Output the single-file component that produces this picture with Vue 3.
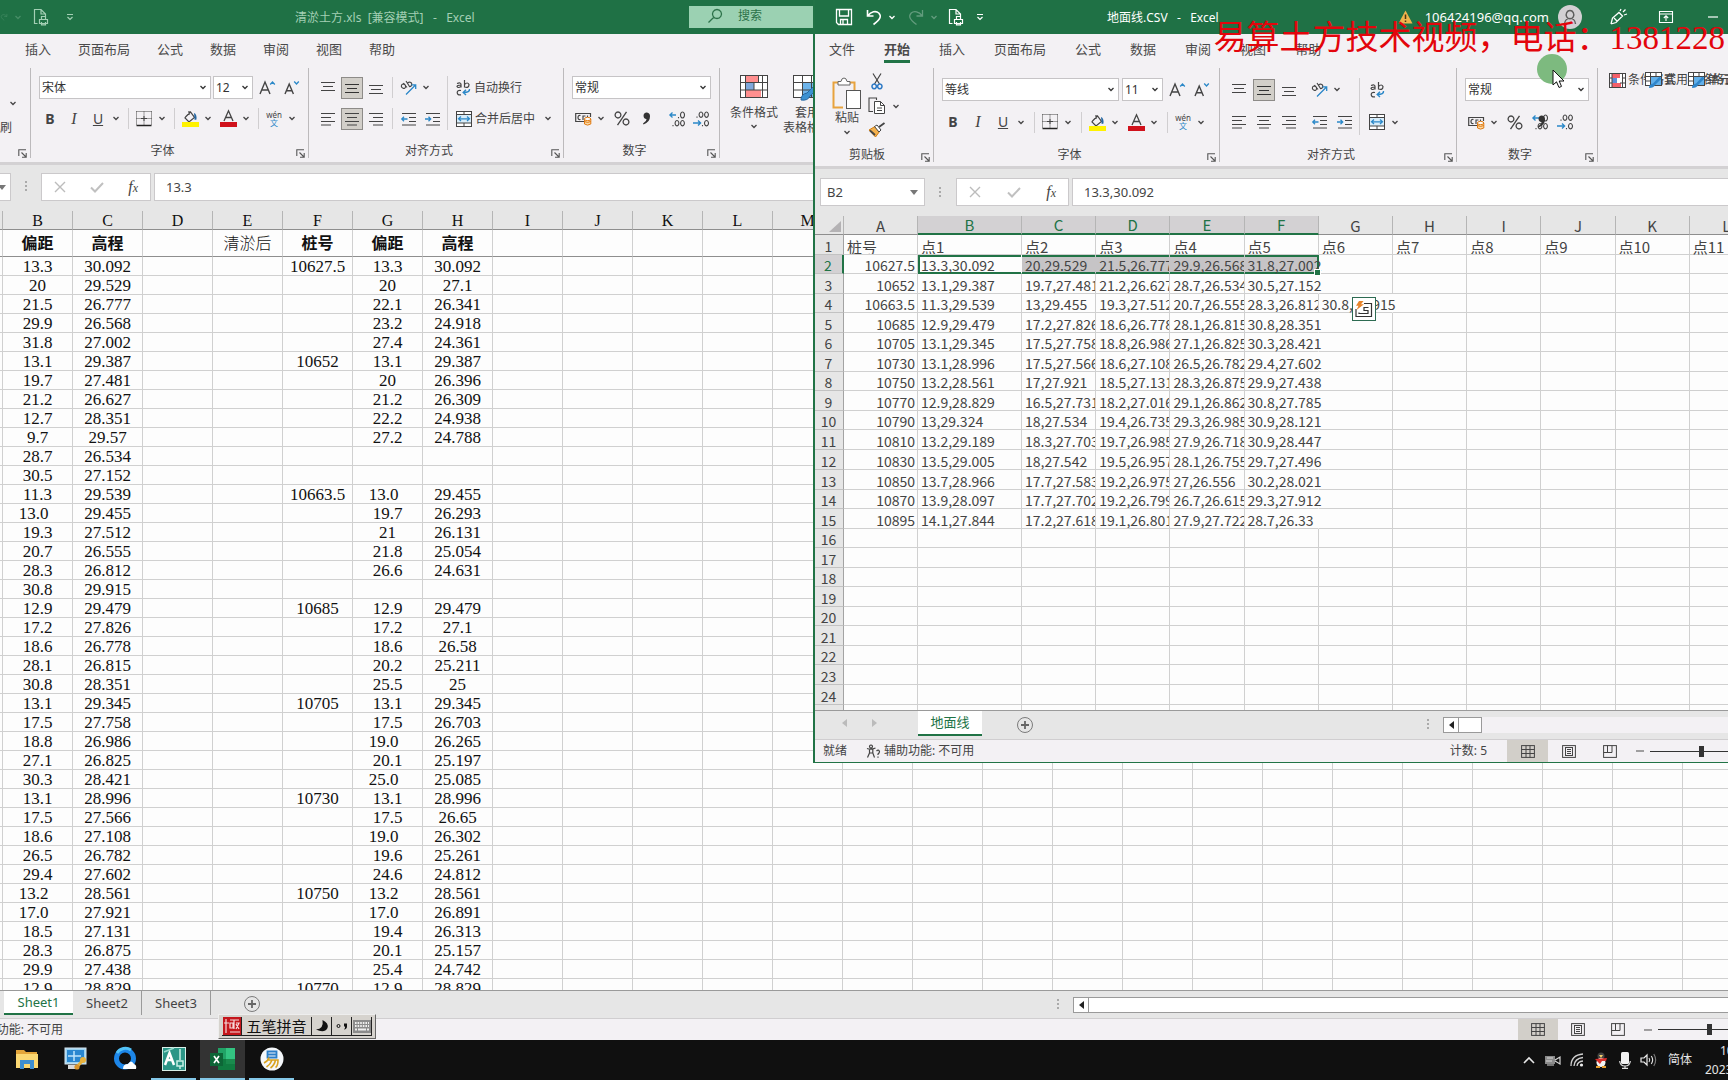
<script setup>
import { h } from 'vue'

const K = '#444'
const st = (d, c = K, w = 1, extra = '') => `<path d="${d}" fill="none" stroke="${c}" stroke-width="${w}" ${extra}/>`
const rc = (x, y, w, hh, fill, stroke = 'none') => `<rect x="${x}" y="${y}" width="${w}" height="${hh}" fill="${fill}" stroke="${stroke}"/>`

const icons = {
  chev: [8, 5, st('M1.5 1 L4 3.5 L6.5 1', 'currentColor', 1.3)],
  chevBar: [8, 8, st('M1 1.5 H7 M1.5 4 L4 6.5 L6.5 4', 'currentColor', 1.2)],
  printDoc: [16, 18, st('M4.5 15.5 H1.5 V1.5 H8 L12.5 6 V8 M8 1.5 V6 H12.5', 'currentColor', 1.2) + st('M6.5 11.5 H14.5 V15.5 H6.5 Z M8.5 11 V8.5 H12.5 V11 M8.5 14 V16.8 H12.5 V14', 'currentColor', 1.2)],
  save: [18, 18, st('M1.5 1.5 H16.5 V16.5 H3.5 L1.5 14.5 Z M4.5 2 V8 H13.5 V2 M5.5 16 V11.5 H12.5 V16 M8 12 V16', 'currentColor', 1.3)],
  undo: [18, 18, st('M2.5 2 V8 H8.5 M3 7.5 C6 3.5 11 2.5 13.8 5 C17 8.5 15 11.5 8.5 16.5', 'currentColor', 1.6)],
  redo: [18, 18, st('M15.5 2 V8 H9.5 M15 7.5 C12 3.5 7 2.5 4.2 5 C1 8.5 3 11.5 9.5 16.5', 'currentColor', 1.3)],
  lens: [16, 16, st('M10 1.5 a4.5 4.5 0 1 1 -.01 0 M6.8 9.2 L1.5 14.5', 'currentColor', 1.3)],
  warn: [15, 14, '<path d="M7.5 .5 L14.5 13.5 H.5 Z" fill="#f0b44c"/>' + st('M7.5 4.5 V9 M7.5 10.5 V12', '#4a3510', 1.5)],
  person: [24, 24, '<circle cx="12" cy="12" r="12" fill="#d2d0d3"/>' + st('M12 5.5 a3.8 4.2 0 1 1 -.01 0 M6.5 19 C7 11.5 17 11.5 17.5 19', '#5d5d5d', 1.4)],
  pen: [20, 18, st('M2 16 L3.5 10 L10 4.5 L13.5 8 L7 14.5 L2 16 M8 13 L5 10 M11 3 L12 1 M14 4 L16.5 1.5 M15 7 L18 6', 'currentColor', 1.3)],
  display: [14, 12, st('M.5 .5 H13.5 V11.5 H.5 Z M.5 3 H13.5 M7 10 V5 M4.8 7 L7 4.8 L9.2 7', 'currentColor', 1.1)],
  minus: [10, 2, st('M0 1 H10', 'currentColor', 1.2)],
  launch: [10, 9, st('M.8 7 V.8 H8 M3.5 3.5 L8 8 M8.2 4 V8.2 H4', '#555', 1.1)],
  bigA: [16, 16, st('M1 14 L6 2 L11 14 M2.7 10 H9.3', K, 1.4) + st('M11.2 4.5 L13.5 2 L15.8 4.5', '#2b88c8', 1.3)],
  smallA: [16, 16, st('M1 14 L5.2 4 L9.4 14 M2.5 10.8 H8', K, 1.4) + st('M10.2 1.5 L12.5 4 L14.8 1.5', '#2b88c8', 1.3)],
  borders: [16, 16, st('M.5 .5 H15.5 M.5 .5 V14 M15.5 .5 V14 M8 .5 V14 M.5 7.5 H15.5', K, 1, 'stroke-dasharray="1 1"') + st('M5 7.5 H11 M8 5 V10') + st('M.5 14.5 H15.5', '#222', 1.5)],
  fill: [17, 17, st('M4 6.5 L8.5 2 L12.5 7.5 L7 12 L3 8 Z M7 1 V5', K, 1.2) + '<path d="M12 3 Q15 4 14.5 9.5 L12.7 10 Z" fill="#2668a3"/>' + rc(0, 12, 17, 5, '#fff200')],
  fontA: [17, 17, st('M4 11 L8.5 .8 L13 11 M5.6 7.5 H11.4', K, 1.3) + rc(0, 12, 17, 5, '#d0111b')],
  alignTop: [14, 14, st('M0 1.5 H14 M2 5.5 H12 M0 9.5 H14')],
  alignMid: [14, 14, st('M0 3.5 H14 M2 7.5 H12 M0 11.5 H14', '#333')],
  alignBot: [14, 14, st('M0 4.5 H14 M2 8.5 H12 M0 12.5 H14')],
  left: [14, 14, st('M0 1.5 H14 M0 5.5 H10 M0 9.5 H14 M0 13 H10')],
  center: [14, 14, st('M0 1.5 H14 M2 5.5 H12 M0 9.5 H14 M2 13 H12')],
  right: [14, 14, st('M0 1.5 H14 M4 5.5 H14 M0 9.5 H14 M4 13 H14')],
  rotate: [17, 16, st('M1.5 5.5 a2.2 1.8 40 1 0 4 1.5 a2.2 1.8 40 1 0 -4 -1.5 M3.5 3 L7 7.5 M6 1 L9.5 6.5 M7.5 3.5 a2.2 2.2 0 1 1 1.5 3', K, 1.1) + st('M6 14.5 L15.5 5 M11.5 4.8 H15.7 V9', '#2b88c8', 1.3)],
  wrap: [15, 16, st('M1 3.5 Q5 2 5 4.5 V7.5 M5 5 Q1 5 1 6.5 Q2 8.5 5 6.5 M8.5 0 V7.5 M8.5 4.5 Q11.5 1.5 13 4.5 Q13 8.5 8.5 7 M5 10.5 Q1.2 9.8 1.2 12.8 Q1.5 15.5 5 14.8', K, 1.2) + st('M13.5 9 Q14 12.5 7.5 12.5 M10 9.8 L7.2 12.5 L10 15', '#2b88c8', 1.4)],
  outdent: [15, 14, st('M1 1.5 H15 M8 5.5 H15 M8 9.5 H15 M1 13 H15') + st('M1 7 H6.5 M3 4.8 L.8 7 L3 9.2', '#2b88c8', 1.3)],
  indent: [15, 14, st('M1 1.5 H15 M8 5.5 H15 M8 9.5 H15 M1 13 H15') + st('M0 7 H5.5 M3.5 4.8 L5.7 7 L3.5 9.2', '#2b88c8', 1.3)],
  merge: [16, 16, rc(.5, .5, 15, 15, '#fff', K) + rc(1, 4, 14, 8, '#d8edfa') + st('M.5 3.5 H15.5 M.5 12 H15.5 M8 .5 V3.5 M8 12 V15.5') + st('M2.5 7.8 H13.5 M5 5.5 L2.5 7.8 L5 10 M11 5.5 L13.5 7.8 L11 10', '#2b88c8', 1.2)],
  money: [17, 15, st('M9 10.5 H.7 V2.5 H15.5 V6 M5.5 4.5 Q3 4 3 6.5 Q3 9 5.5 8.5 M8 9 V5 H10.5 M12.5 4.5 V6', K, 1.2) + '<path d="M9.5 8 V13 Q12.5 15.2 15.8 13 V8 Z" fill="#fbd9a5" stroke="#e07b13"/><ellipse cx="12.6" cy="8" rx="3.2" ry="1.6" fill="#fff" stroke="#e07b13"/>' + st('M9.5 10.5 Q12.5 12.4 15.8 10.5', '#e07b13')],
  percent: [16, 15, st('M4 1 a2.9 3 0 1 1 -.01 0 M12 8 a2.9 3 0 1 1 -.01 0 M12.5 .8 L3.5 14.2', K, 1.3)],
  comma: [9, 13, '<path d="M4.2 .5 A3.6 3.6 0 0 1 8 4.5 Q8 10 1.5 12.5 L1 11.5 Q4.5 9.5 4.6 7.2 A3.4 3.4 0 0 1 4.2 .5 Z" fill="#333"/>'],
  moreDec: [17, 16, st('M13.5 1 a2 3 0 1 1 -.01 0 M8 9.5 a1.9 2.7 0 1 1 -.01 0 M13.5 9.5 a1.9 2.7 0 1 1 -.01 0 M9.5 6 V7.2 M4 14 V15.2', K, 1.1) + st('M.8 4 H7 M3.5 1.5 L.9 4 L3.5 6.5', '#2b88c8', 1.3)],
  lessDec: [17, 16, st('M8 1 a1.9 2.7 0 1 1 -.01 0 M13.5 1 a1.9 2.7 0 1 1 -.01 0 M13.5 9.5 a2 2.7 0 1 1 -.01 0 M4 5.5 V6.7 M9.5 14 V15.2', K, 1.1) + st('M0 12 H7.5 M5 9.5 L7.6 12 L5 14.5', '#2b88c8', 1.3)],
  cond: [28, 23, rc(.5, .5, 27, 22, '#fff', K) + rc(6, 1, 12, 7, '#ff8f8f') + rc(6, 8, 8, 7, '#7fa8dc') + rc(6, 15, 15, 7, '#ff8f8f') + st('M.5 7.5 H27.5 M.5 15 H27.5 M5.5 .5 V22.5 M22.5 .5 V22.5 M18.5 .5 V7.5 M14 7.5 V15')],
  condSmall: [17, 15, rc(.5, .5, 16, 14, '#fff', K) + rc(3, 1, 8, 4, '#f4606a') + rc(3, 5, 5, 5, '#5c8fd6') + rc(3, 10, 9, 4, '#f4606a') + st('M3 .5 V14.5 M13.5 .5 V14.5 M.5 5 H3 M.5 10 H3 M13 5 H16.5 M11 10 H16.5')],
  tableSmall: [17, 16, rc(.5, .5, 16, 13, '#fff', K) + rc(5, 4, 11, 9, '#62b0ea') + st('M.5 4.5 H16.5 M.5 9 H5 M5.5 .5 V13.5 M11 .5 V5') + '<path d="M4 16 Q4 12 8 11.5 L14.5 4.5 L16.5 6.5 L10 13 Q9 16 4 16 Z" fill="#2f86cb"/>'],
  tableFmt: [28, 26, rc(.5, .5, 27, 22, '#fff', K) + rc(9, 8, 18, 14, '#6db4ea') + st('M.5 7.5 H27.5 M.5 15 H27.5 M9.5 .5 V22.5 M18.5 .5 V22.5') + '<path d="M8 25 Q8 19 14 18 L24 8 L27 11 L17 21 Q15 26 8 25 Z" fill="#3b91d1" stroke="#2668a3"/>'],
  paste: [30, 34, st('M11 30.5 H1.5 V5.5 H8 M16 5.5 H22.5 V13', '#e8a33d', 2) + '<path d="M6 8 V4.5 H9 Q9.5 1 12 1 Q14.5 1 15 4.5 H18 V8 Z" fill="#fff" stroke="#666"/>' + rc(14.5, 13.5, 14, 18, '#fff', '#555')],
  scissors: [12, 17, st('M2 .5 L8.5 11 M10 .5 L3.5 11', K, 1.2) + st('M3.2 11 a2.2 2.4 0 1 1 -.01 0 M8.8 11 a2.2 2.4 0 1 1 -.01 0', '#2b78c4', 1.5)],
  copy: [18, 18, st('M5 14.5 H1 V1 H8.5 V3', K, 1.1) + '<path d="M6.5 4.5 H12.5 L16.5 8.5 V16.5 H6.5 Z" fill="#fff" stroke="#444"/>' + st('M12.5 4.5 V8.5 H16.5 M9 11 H14 M9 13.5 H14')],
  brush: [18, 16, '<path d="M1 8 L7 4.5 L11.5 9.5 L7.5 15 Z" fill="#f3b04d" stroke="#d07c10"/>' + '<path d="M6.5 4.5 L9 3 L13 8 L11 10 Z" fill="#fff" stroke="#444"/>' + st('M11 5 L16.5 1 M2 8.5 L7 13', '#444', 1.8)],
  cross: [12, 12, st('M1 1 L11 11 M11 1 L1 11', '#bcbcbc', 1.4)],
  tick: [14, 11, st('M1 5.5 L5 9.5 L13 1', '#c0c0c0', 2)],
  tri: [8, 5, '<path d="M0 0 H8 L4 5 Z" fill="#777"/>'],
  corner: [12, 11, '<path d="M12 0 V11 H0 Z" fill="#b4b2b4"/>'],
  plus: [18, 18, '<circle cx="9" cy="9" r="7.5" fill="none" stroke="#7b7b7b"/>' + st('M9 5 V13 M5 9 H13', '#666', 1.8)],
  normal: [14, 13, rc(.6, .6, 12.8, 11.8, 'none', K) + st('M5 .5 V12.5 M9 .5 V12.5 M.5 4.5 H13.5 M.5 8.5 H13.5')],
  page: [14, 13, rc(.6, .6, 12.8, 11.8, 'none', K) + rc(3.5, 2.5, 7, 8, 'none', K) + st('M5 4.5 H9 M5 6.5 H9 M5 8.5 H9')],
  breaks: [14, 13, rc(.6, .6, 12.8, 11.8, 'none', K) + st('M4.5 .5 V8 M.5 7.5 H9 V.5')],
  access: [15, 15, st('M5 1 a1.5 1.5 0 1 1 -.01 0 M1 4.5 Q5 6 9.5 4 M3.5 5.5 L3.5 9 L1.5 13.5 M6.8 5.5 V9 L8.5 13.5 M3.5 9 H6.8 M10.5 7 Q12.5 5 13.5 7.5 Q13.5 9 12 10 V11 M12 12.5 V13.8', '#444', 1.2)],
  arrowL: [5, 8, '<path d="M5 0 V8 L0 4 Z" fill="currentColor"/>'],
  arrowR: [5, 8, '<path d="M0 0 V8 L5 4 Z" fill="currentColor"/>'],
  quick: [18, 18, st('M1 9 V16.5 H16.5 V3.5 H9 M4 12.5 V13.5 H13 V10.5 H9 V7.5 H13.5', '#333', 1.2) + '<path d="M4 1 H8.5 L6 4.2 H9 L1.5 10 L3.5 5.8 H1 Z" fill="#e8842a"/>'],
  pointer: [13, 20, '<path d="M1 1 V16 L4.5 12.8 L7 18.5 L9.5 17.4 L7.2 12 H12 Z" fill="#fff" stroke="#111"/>'],
  folder: [22, 20, '<path d="M0 1 H8 L10 3 H21 V18 H0 Z" fill="#e3a53a"/><path d="M0 5 H22 V19 H0 Z" fill="#fbd873"/><path d="M4 11 H18 V20 H14 V15 H8 V20 H4 Z" fill="#3d8ed0"/>'],
  monitor: [24, 24, rc(1, 1, 21, 16, '#9cd3f2', '#d8e6ef') + rc(3, 3, 17, 12, '#2a87d0') + st('M4 9 H17 M10 4 V14', '#bfe4fa', 1.5) + rc(4, 18, 10, 4, '#d8d8d8') + st('M12 21 L19 13', '#e8b13c', 3) + '<circle cx="19" cy="13" r="3" fill="#e8b13c"/><circle cx="13" cy="20" r="2.6" fill="#d9942a"/>'],
  browser: [24, 24, '<circle cx="12" cy="11.5" r="8.5" fill="none" stroke="#1d86e8" stroke-width="5"/><path d="M4 6 A10 10 0 0 1 18 3" fill="none" stroke="#53c3f7" stroke-width="3"/><path d="M10 22 Q10 17 15 17 Q18 12 21 17 Q24 18 23 22 Z" fill="#fff"/>'],
  cad: [24, 24, rc(.5, .5, 23, 23, '#2b9687', '#d9efe9') + st('M3 18 L7.5 6 L12 18 M5 13 H10', '#fff', 2.5) + st('M18 2 V13 M15 14 H21 V19 H15 Z M18 19 V22', '#c8efe5', 1.5) + st('M2 5 L12 1', '#9adccf', 1.5)],
  excel: [25, 22, rc(8, 0, 17, 22, '#21a366') + rc(16, 0, 9, 11, '#33c481') + rc(8, 11, 17, 11, '#107c41') + rc(16, 11, 9, 5, '#1a8a4d') + rc(0, 5, 13, 13, '#0d6637') + st('M4 8 L9 15 M9 8 L4 15', '#fff', 1.7)],
  yi: [24, 24, '<circle cx="12" cy="12" r="11.5" fill="#f4f7fa"/>' + st('M7.5 4.5 H16.5 V10.5 H7.5 Z M7.5 7.5 H16.5', '#2c7fc9', 1.8) + st('M9 10.5 Q8 14 4 16 M7.5 13 H18 Q18 19 15.5 20.5 M12 13 Q10.5 17.5 6.5 20 M15.5 13 Q14.5 18 10.5 21', '#d9a31f', 1.6)],
  up: [12, 8, st('M1 7 L6 2 L11 7', '#e8e8e8', 1.6)],
  camera: [17, 11, rc(1, 1, 10, 8, '#8a8a8a') + st('M3 3 H9 M2 6 H8 M11 5 L16 2 V9 L11 6 M3 10 H10', '#d5d5d5', 1.2)],
  wifi: [14, 14, st('M1 13 Q1 2 13 1 M4 13 Q4.5 5.5 13 4.5 M7 13 Q7.5 8.5 13 8', '#cfcfcf', 1.3) + '<circle cx="11.5" cy="12" r="1.6" fill="#eee"/>'],
  penguin: [14, 16, '<ellipse cx="7" cy="4" rx="3.5" ry="3.5" fill="#444"/><path d="M5 3 H9 L7 6 Z" fill="#f6d36a"/><ellipse cx="7" cy="10.5" rx="4.5" ry="4.5" fill="#f4f4f4"/><path d="M1 7 L13 6 L12 9 H8 L6 12 L3 9 Z" fill="#d92f2a"/><path d="M2 14 H6 V16 H2 Z M8 14 H12 V16 H8 Z" fill="#e8a02f"/>'],
  mic: [12, 17, '<rect x="2" y="0" width="8" height="12" rx="1.5" fill="#f2f2f2"/>' + st('M.7 9 Q1 14 6 14 Q11 14 11.3 9 M6 14 V16.3 M3 16.3 H9', '#e0e0e0', 1.2)],
  speaker: [17, 14, st('M1 5 H4 L7 2 V12 L4 9 H1 Z', '#eee', 1.2) + st('M9 5 Q10.5 7 9 9 M11.3 3 Q14 7 11.3 11', '#ddd', 1.2) + st('M13.8 1 Q17.5 7 13.8 13', '#777', 1.2)],
  moon: [12, 12, '<path d="M6.5 0 Q13 3 11.5 8 Q8.5 13.5 0 9.5 Q8 9 6.5 0 Z" fill="#111"/>'],
  punct: [12, 8, '<circle cx="2.5" cy="4" r="1.5" fill="none" stroke="#111"/><path d="M8 1.5 H11 V4.5 Q11 7 8 7.5 Q9.5 6 9 4.5 H8 Z" fill="#111"/>'],
  keys: [18, 13, rc(0, 0, 18, 13, '#8b8b8b') + st('M2 3 H16 M2 6 H16', '#eee', 1.8, 'stroke-dasharray="1.6 1"') + st('M2 9.5 H4 M5 9.5 H13 M14 9.5 H16', '#eee', 1.8)],
  seal: [18, 18, rc(0, 0, 18, 18, '#c4161c') + st('M3 2 V16 M1 6 H6 M7 3 H16 M11 3 V12 M7 6 H10 V11 H7 Z M13 6 H16 L13 12 M13 7 L16 12 M7 15 H17', '#f6dcdc', 1.2)]
}

const Icon = (props) => {
  const [w, ht, body] = icons[props.name]
  return h('svg', { width: props.w || w, height: props.ht || ht, viewBox: `0 0 ${w} ${ht}`, 'aria-hidden': 'true', innerHTML: body })
}
Icon.props = ['name', 'w', 'ht']

const backTabs = ['插入', '页面布局', '公式', '数据', '审阅', '视图', '帮助']
const frontTabs = ['文件', '开始', '插入', '页面布局', '公式', '数据', '审阅', '视图', '帮助']

const backCols = 'BCDEFGHIJKLMNOPQRSTUVWXYZ'.split('')
const backHead = ['偏距', '高程', '', '清淤后', '桩号', '偏距', '高程']
const backData = `13.3|30.092|10627.5|13.3|30.092
20|29.529||20|27.1
21.5|26.777||22.1|26.341
29.9|26.568||23.2|24.918
31.8|27.002||27.4|24.361
13.1|29.387|10652|13.1|29.387
19.7|27.481||20|26.396
21.2|26.627||21.2|26.309
12.7|28.351||22.2|24.938
9.7|29.57||27.2|24.788
28.7|26.534|||
30.5|27.152|||
11.3|29.539|10663.5|13.0 |29.455
13.0 |29.455||19.7|26.293
19.3|27.512||21|26.131
20.7|26.555||21.8|25.054
28.3|26.812||26.6|24.631
30.8|29.915|||
12.9|29.479|10685|12.9|29.479
17.2|27.826||17.2|27.1
18.6|26.778||18.6|26.58
28.1|26.815||20.2|25.211
30.8|28.351||25.5|25
13.1|29.345|10705|13.1|29.345
17.5|27.758||17.5|26.703
18.8|26.986||19.0 |26.265
27.1|26.825||20.1|25.197
30.3|28.421||25.0 |25.085
13.1|28.996|10730|13.1|28.996
17.5|27.566||17.5|26.65
18.6|27.108||19.0 |26.302
26.5|26.782||19.6|25.261
29.4|27.602||24.6|24.812
13.2 |28.561|10750|13.2 |28.561
17.0 |27.921||17.0 |26.891
18.5|27.131||19.4|26.313
28.3|26.875||20.1|25.157
29.9|27.438||25.4|24.742
12.9|28.829|10770|12.9|28.829`.split('\n').map((line) => {
  const [b, c, f, g, hh] = line.split('|')
  const row = [b, c, '', '', f, g, hh]
  return backCols.map((_, i) => row[i] || '')
})

const frontCols = 'ABCDEFGHIJKL'.split('')
const frontData = `桩号|点1|点2|点3|点4|点5|点6|点7|点8|点9|点10|点11
10627.5|13.3,30.092|20,29.529|21.5,26.777|29.9,26.568|31.8,27.002
10652|13.1,29.387|19.7,27.481|21.2,26.627|28.7,26.534|30.5,27.152
10663.5|11.3,29.539|13,29.455|19.3,27.512|20.7,26.555|28.3,26.812|30.8,29.915
10685|12.9,29.479|17.2,27.826|18.6,26.778|28.1,26.815|30.8,28.351
10705|13.1,29.345|17.5,27.758|18.8,26.986|27.1,26.825|30.3,28.421
10730|13.1,28.996|17.5,27.566|18.6,27.108|26.5,26.782|29.4,27.602
10750|13.2,28.561|17,27.921|18.5,27.131|28.3,26.875|29.9,27.438
10770|12.9,28.829|16.5,27.731|18.2,27.016|29.1,26.862|30.8,27.785
10790|13,29.324|18,27.534|19.4,26.735|29.3,26.985|30.9,28.121
10810|13.2,29.189|18.3,27.703|19.7,26.985|27.9,26.718|30.9,28.447
10830|13.5,29.005|18,27.542|19.5,26.957|28.1,26.755|29.7,27.496
10850|13.7,28.966|17.7,27.583|19.2,26.975|27,26.556|30.2,28.021
10870|13.9,28.097|17.7,27.702|19.2,26.799|26.7,26.615|29.3,27.912
10895|14.1,27.844|17.2,27.618|19.1,26.801|27.9,27.722|28.7,26.33`.split('\n').map((l) => l.split('|'))
const frontRows = Array.from({ length: 25 }, (_, r) => frontCols.map((_, c) => (frontData[r] || [])[c] || ''))

const frontCellClass = (r, c) => ({
  num: c === 0 && r > 0,
  title: r === 0,
  sel: r === 1 && c > 0 && c < 6,
  shade: r === 1 && c > 1 && c < 6,
  first: r === 1 && c === 1,
  last: r === 1 && c === 5,
  spill: !!frontRows[r][c] && !frontRows[r][c + 1]
})

const taskApps = [
  { icon: 'folder', label: '文件资源管理器' },
  { icon: 'monitor', label: '系统工具' },
  { icon: 'browser', label: '浏览器' },
  { icon: 'cad', label: 'CAD', open: true },
  { icon: 'excel', label: 'Excel', active: true },
  { icon: 'yi', label: '易算土方', open: true }
]
const trayIcons = ['up', 'camera', 'wifi', 'penguin', 'mic', 'speaker']
</script>

<template>
  <div class="screen">
    <main class="desktop">
      <section class="window back">
        <header class="titlebar">
          <div class="qat">
            <Icon name="redo" class="dim" /><Icon name="chev" class="dim" />
            <button aria-label="打印预览"><Icon name="printDoc" /></button>
            <button aria-label="自定义快速访问工具栏"><Icon name="chevBar" /></button>
          </div>
          <h1 class="doc">清淤土方.xls&nbsp; [兼容模式]&nbsp;&nbsp; -&nbsp;&nbsp; Excel</h1>
          <button class="search"><Icon name="lens" />搜索</button>
        </header>
        <nav class="tabs"><button v-for="t in backTabs" :key="t">{{ t }}</button></nav>
        <div class="ribbon">
          <div class="group clip">
            <div class="tools"><Icon name="chev" /><span>刷</span></div>
            <footer><Icon name="launch" class="launch" /></footer>
          </div>
          <div class="group font">
            <div class="tools">
              <div class="row">
                <div class="combo wide"><select aria-label="字体"><option>宋体</option></select><Icon name="chev" /></div>
                <div class="combo size"><select aria-label="字号"><option>12</option></select><Icon name="chev" /></div>
                <button class="grow" aria-label="增大字号"><Icon name="bigA" /></button>
                <button class="grow" aria-label="减小字号"><Icon name="smallA" /></button>
              </div>
              <div class="row second">
                <button class="ib"><b>B</b></button><button class="ib gap"><i>I</i></button><button class="ib gap"><u>U</u></button><button class="dd" aria-label="下划线样式"><Icon name="chev" /></button>
                <span class="sep"></span>
                <button class="ib" aria-label="边框"><Icon name="borders" /></button><button class="dd" aria-label="边框选项"><Icon name="chev" /></button>
                <span class="sep"></span>
                <button class="ib" aria-label="填充颜色"><Icon name="fill" /></button><button class="dd" aria-label="填充选项"><Icon name="chev" /></button>
                <button class="ib gap" aria-label="字体颜色"><Icon name="fontA" /></button><button class="dd" aria-label="颜色选项"><Icon name="chev" /></button>
                <span class="sep"></span>
                <button class="ib wen"><span>wén</span><span class="zi">文</span></button><button class="dd" aria-label="拼音选项"><Icon name="chev" /></button>
              </div>
            </div>
            <footer>字体<Icon name="launch" class="launch" /></footer>
          </div>
          <div class="group align">
            <div class="tools split">
              <div>
                <div class="row">
                  <button class="ib" aria-label="顶端对齐"><Icon name="alignTop" /></button><button class="ib on gap" aria-label="垂直居中"><Icon name="alignMid" /></button><button class="ib gap" aria-label="底端对齐"><Icon name="alignBot" /></button>
                  <span class="sep"></span>
                  <button class="ib" aria-label="方向"><Icon name="rotate" /></button><button class="dd" aria-label="方向选项"><Icon name="chev" /></button>
                </div>
                <div class="row second">
                  <button class="ib" aria-label="左对齐"><Icon name="left" /></button><button class="ib on gap" aria-label="居中"><Icon name="center" /></button><button class="ib gap" aria-label="右对齐"><Icon name="right" /></button>
                  <span class="sep"></span>
                  <button class="ib" aria-label="减少缩进量"><Icon name="outdent" /></button><button class="ib gap" aria-label="增加缩进量"><Icon name="indent" /></button>
                </div>
              </div>
              <div class="wrapcol">
                <div class="row"><button class="tb"><Icon name="wrap" />自动换行</button></div>
                <div class="row second"><button class="tb"><Icon name="merge" />合并后居中</button><button class="dd far" aria-label="合并选项"><Icon name="chev" /></button></div>
              </div>
            </div>
            <footer>对齐方式<Icon name="launch" class="launch" /></footer>
          </div>
          <div class="group number">
            <div class="tools">
              <div class="row"><div class="combo full"><select aria-label="数字格式"><option>常规</option></select><Icon name="chev" /></div></div>
              <div class="row second">
                <button class="ib" aria-label="会计数字格式"><Icon name="money" /></button><button class="dd" aria-label="会计选项"><Icon name="chev" /></button>
                <button class="ib pc" aria-label="百分比"><Icon name="percent" /></button>
                <button class="ib gap" aria-label="千位分隔"><Icon name="comma" /></button>
                <span class="sep"></span>
                <button class="ib" aria-label="增加小数位数"><Icon name="moreDec" /></button><button class="ib gap" aria-label="减少小数位数"><Icon name="lessDec" /></button>
              </div>
            </div>
            <footer>数字<Icon name="launch" class="launch" /></footer>
          </div>
          <div class="group styles">
            <button class="big"><Icon name="cond" /><span>条件格式</span><Icon name="chev" /></button>
            <button class="big"><Icon name="tableFmt" ht="26" /><span>套用</span><span>表格格式</span></button>
          </div>
        </div>
        <div class="formula">
          <div class="namebox"><input aria-label="名称框" value="" /><Icon name="tri" /></div>
          <span class="dots"></span>
          <div class="fx"><Icon name="cross" /><Icon name="tick" /><em>f<small>x</small></em></div>
          <input class="entry" aria-label="编辑栏" value="13.3" />
        </div>
        <div class="sheet">
          <table>
            <colgroup><col class="edge" /><col v-for="c in backCols" :key="c" class="unit" /></colgroup>
            <thead><tr><th></th><th v-for="c in backCols" :key="c">{{ c }}</th></tr></thead>
            <tbody>
              <tr class="head"><td></td><td v-for="(c, i) in backCols" :key="c" :class="{ light: i === 3 }">{{ backHead[i] }}</td></tr>
              <tr v-for="(row, r) in backData" :key="r"><td></td><td v-for="(v, i) in row" :key="i" :class="{ spaced: v.endsWith(' ') }">{{ v.trim() }}</td></tr>
            </tbody>
          </table>
        </div>
        <div class="sheetbar">
          <button class="stab active">Sheet1</button><button class="stab">Sheet2</button><button class="stab">Sheet3</button>
          <button class="add" aria-label="新工作表"><Icon name="plus" /></button>
          <span class="space"></span><span class="dots"></span>
          <div class="hscroll"><button aria-label="向左滚动"><Icon name="arrowL" /></button></div>
        </div>
        <div class="status">
          <span class="tail">辅助功能: 不可用</span><span class="space"></span>
          <button class="view on" aria-label="普通"><Icon name="normal" /></button><button class="view" aria-label="页面布局"><Icon name="page" /></button><button class="view" aria-label="分页预览"><Icon name="breaks" /></button>
          <button class="less" aria-label="缩小"><Icon name="minus" w="8" /></button>
          <div class="zoom"><input type="range" aria-label="显示比例" value="50" /></div>
        </div>
      </section>

      <section class="window front">
        <header class="titlebar">
          <div class="qat">
            <button aria-label="保存"><Icon name="save" /></button>
            <button aria-label="撤消"><Icon name="undo" /></button><Icon name="chev" />
            <Icon name="redo" class="dim again" /><Icon name="chev" class="dim" />
            <button class="print" aria-label="打印预览"><Icon name="printDoc" /></button>
            <button aria-label="自定义快速访问工具栏"><Icon name="chevBar" /></button>
          </div>
          <h1 class="doc">地面线.CSV&nbsp;&nbsp; -&nbsp;&nbsp; Excel</h1>
          <div class="account">
            <Icon name="warn" /><span class="mail">106424196@qq.com</span><Icon name="person" />
            <button class="pen" aria-label="墨迹"><Icon name="pen" /></button>
            <button class="disp" aria-label="功能区显示选项"><Icon name="display" /></button>
            <button class="min" aria-label="最小化"><Icon name="minus" /></button>
          </div>
        </header>
        <nav class="tabs"><button v-for="t in frontTabs" :key="t" :class="{ current: t === '开始' }">{{ t }}</button></nav>
        <div class="ribbon">
          <div class="group clip">
            <div class="tools">
              <button class="paste"><Icon name="paste" /><span>粘贴</span><Icon name="chev" /></button>
              <div class="stack">
                <button aria-label="剪切"><Icon name="scissors" /></button>
                <button aria-label="复制"><Icon name="copy" /><Icon name="chev" /></button>
                <button aria-label="格式刷"><Icon name="brush" /></button>
              </div>
            </div>
            <footer>剪贴板<Icon name="launch" class="launch" /></footer>
          </div>
          <div class="group font">
            <div class="tools">
              <div class="row">
                <div class="combo wide"><select aria-label="字体"><option>等线</option></select><Icon name="chev" /></div>
                <div class="combo size"><select aria-label="字号"><option>11</option></select><Icon name="chev" /></div>
                <button class="grow" aria-label="增大字号"><Icon name="bigA" /></button>
                <button class="grow" aria-label="减小字号"><Icon name="smallA" /></button>
              </div>
              <div class="row second">
                <button class="ib"><b>B</b></button><button class="ib gap"><i>I</i></button><button class="ib gap"><u>U</u></button><button class="dd" aria-label="下划线样式"><Icon name="chev" /></button>
                <span class="sep"></span>
                <button class="ib" aria-label="边框"><Icon name="borders" /></button><button class="dd" aria-label="边框选项"><Icon name="chev" /></button>
                <span class="sep"></span>
                <button class="ib" aria-label="填充颜色"><Icon name="fill" /></button><button class="dd" aria-label="填充选项"><Icon name="chev" /></button>
                <button class="ib gap" aria-label="字体颜色"><Icon name="fontA" /></button><button class="dd" aria-label="颜色选项"><Icon name="chev" /></button>
                <span class="sep"></span>
                <button class="ib wen"><span>wén</span><span class="zi">文</span></button><button class="dd" aria-label="拼音选项"><Icon name="chev" /></button>
              </div>
            </div>
            <footer>字体<Icon name="launch" class="launch" /></footer>
          </div>
          <div class="group align">
            <div class="tools split">
              <div>
                <div class="row">
                  <button class="ib" aria-label="顶端对齐"><Icon name="alignTop" /></button><button class="ib on gap" aria-label="垂直居中"><Icon name="alignMid" /></button><button class="ib gap" aria-label="底端对齐"><Icon name="alignBot" /></button>
                  <button class="ib apart" aria-label="方向"><Icon name="rotate" /></button><button class="dd" aria-label="方向选项"><Icon name="chev" /></button>
                </div>
                <div class="row second">
                  <button class="ib" aria-label="左对齐"><Icon name="left" /></button><button class="ib gap" aria-label="居中"><Icon name="center" /></button><button class="ib gap" aria-label="右对齐"><Icon name="right" /></button>
                  <button class="ib apart" aria-label="减少缩进量"><Icon name="outdent" /></button><button class="ib gap" aria-label="增加缩进量"><Icon name="indent" /></button>
                </div>
              </div>
              <div class="wrapcol">
                <div class="row"><button class="ib" aria-label="自动换行"><Icon name="wrap" /></button></div>
                <div class="row second"><button class="ib" aria-label="合并后居中"><Icon name="merge" /></button><button class="dd" aria-label="合并选项"><Icon name="chev" /></button></div>
              </div>
            </div>
            <footer>对齐方式<Icon name="launch" class="launch" /></footer>
          </div>
          <div class="group number">
            <div class="tools">
              <div class="row"><div class="combo full"><select aria-label="数字格式"><option>常规</option></select><Icon name="chev" /></div></div>
              <div class="row second">
                <button class="ib" aria-label="会计数字格式"><Icon name="money" /></button><button class="dd" aria-label="会计选项"><Icon name="chev" /></button>
                <button class="ib pc" aria-label="百分比"><Icon name="percent" /></button>
                <button class="ib gap over" aria-label="增加小数位数"><Icon name="moreDec" /><Icon name="comma" class="stacked" /></button>
                <button class="ib gap" aria-label="减少小数位数"><Icon name="lessDec" /></button>
              </div>
            </div>
            <footer>数字<Icon name="launch" class="launch" /></footer>
          </div>
          <div class="group styles">
            <button class="tight"><Icon name="condSmall" />条件格式</button>
            <button class="tight"><Icon name="tableSmall" />套用表格格式</button>
            <button class="tight"><Icon name="tableSmall" />单元格样式</button>
          </div>
        </div>
        <div class="formula">
          <div class="namebox"><input aria-label="名称框" value="B2" /><Icon name="tri" /></div>
          <span class="dots"></span>
          <div class="fx"><Icon name="cross" /><Icon name="tick" /><em>f<small>x</small></em></div>
          <input class="entry" aria-label="编辑栏" value="13.3,30.092" />
        </div>
        <div class="sheet">
          <table>
            <colgroup><col class="rownum" /><col class="ca" /><col class="cb" /><col v-for="n in 10" :key="n" /></colgroup>
            <thead><tr><th class="corner"><Icon name="corner" /></th><th v-for="(c, i) in frontCols" :key="c" :class="{ picked: i > 0 && i < 6 }">{{ c }}</th></tr></thead>
            <tbody>
              <tr v-for="(row, r) in frontRows" :key="r">
                <th :class="{ picked: r === 1 }">{{ r < 24 ? r + 1 : '' }}</th>
                <td v-for="(v, c) in row" :key="c" :class="frontCellClass(r, c)">{{ v }}<span v-if="r === 1 && c === 5" class="handle"></span><button v-if="r === 3 && c === 6" class="quick" aria-label="快速分析"><Icon name="quick" /></button></td>
              </tr>
            </tbody>
          </table>
        </div>
        <div class="sheetbar">
          <div class="arrows"><Icon name="arrowL" /><Icon name="arrowR" /></div>
          <button class="stab active">地面线</button>
          <button class="add" aria-label="新工作表"><Icon name="plus" /></button>
          <span class="space"></span><span class="dots"></span>
          <div class="hscroll"><button aria-label="向左滚动"><Icon name="arrowL" /></button><span class="thumb"></span></div>
        </div>
        <div class="status">
          <span>就绪</span><span class="acc"><Icon name="access" />辅助功能: 不可用</span><span class="space"></span>
          <span class="count">计数: 5</span>
          <button class="view on" aria-label="普通"><Icon name="normal" /></button><button class="view" aria-label="页面布局"><Icon name="page" /></button><button class="view" aria-label="分页预览"><Icon name="breaks" /></button>
          <button class="less" aria-label="缩小"><Icon name="minus" w="8" /></button>
          <div class="zoom"><input type="range" aria-label="显示比例" value="50" /></div>
        </div>
      </section>

      <div class="ime">
        <button class="sealbtn" aria-label="极点"><Icon name="seal" /></button>
        <button class="name">五笔拼音</button>
        <button aria-label="半角"><Icon name="moon" /></button>
        <button aria-label="标点"><Icon name="punct" /></button>
        <button aria-label="软键盘"><Icon name="keys" /></button>
      </div>
    </main>

    <footer class="taskbar">
      <button v-for="a in taskApps" :key="a.icon" class="app" :class="{ open: a.open, active: a.active }" :aria-label="a.label"><Icon :name="a.icon" /></button>
      <span class="space"></span>
      <div class="tray"><span v-for="t in trayIcons" :key="t"><Icon :name="t" /></span></div>
      <span class="lang">简体</span>
      <div class="clock"><span class="time">10</span><span>2023</span></div>
    </footer>

    <div class="banner">易算土方技术视频，电话：1381228</div>
    <div class="spot"><Icon name="pointer" /></div>
  </div>
</template>

<style>
body { margin: 0; overflow: hidden; }
</style>

<style scoped>
.screen, .screen * { box-sizing: border-box; }
.screen { position: relative; display: flex; flex-direction: column; height: 100vh; overflow: hidden; font: 12px/16px "Noto Sans", "Noto Sans CJK SC", sans-serif; color: #444; }
.screen svg { display: block; flex: none; overflow: visible; }
button { display: flex; align-items: center; justify-content: center; flex: none; border: 0; padding: 0; margin: 0; background: none; font: inherit; color: inherit; white-space: nowrap; }
input, select { border: 0; padding: 0; margin: 0; background: none; font: inherit; color: inherit; outline: 0; min-width: 0; }
.desktop { position: relative; display: flex; flex: 1; min-height: 0; }
.window { display: flex; flex-direction: column; background: #f3f1f4; }
.back { width: 100%; min-height: 0; overflow: hidden; }
.front { position: absolute; left: 813px; right: 0; top: 0; height: 763px; overflow: hidden; border-left: 2px solid #217346; border-bottom: 1px solid #217346; }
.space { flex: 1; }

/* title bars */
.titlebar { display: flex; align-items: center; flex: none; height: 34px; background: #1f7145; color: #fff; }
.back .titlebar { color: #a3cfb4; }
.doc { margin: 0; padding-top: 1px; font: inherit; white-space: nowrap; }
.qat { display: flex; align-items: center; flex: none; }
.dim { opacity: .3; }
.back .qat { width: 295px; gap: 19px; overflow: hidden; }
.back .qat > svg:first-child { width: 8px; }
.back .qat > svg + svg { margin-left: -13px; }
.back .qat > button { margin-left: -8px; }
.back .qat > button + button { margin-left: -2px; }
.back .doc { width: 394px; }
.search { width: 124px; height: 22px; justify-content: flex-start; gap: 15px; padding: 0 0 2px 18px; background: #9bd1b2; color: #2c7249; }
.front .titlebar { margin-left: -2px; }
.front .qat { width: 294px; padding-left: 22px; gap: 5px; }
.front .qat > button + button { margin-left: 7px; }
.front .qat > .again { margin-left: 6px; }
.front .qat > .print { margin-left: 5px; }
.account { display: flex; align-items: center; margin-left: auto; }
.mail { margin: 0 9px 0 12px; font-size: 13px; }
.pen { margin-left: 27px; }
.disp { margin-left: 30px; }
.min { margin: 0 10px 0 35px; }

/* ribbon tabs */
.tabs { display: flex; align-items: center; flex: none; height: 32px; padding-bottom: 3px; font-size: 13px; color: #4a4a4a; }
.tabs button { height: 28px; }
.back .tabs { gap: 27px; padding-left: 25px; }
.front .tabs { gap: 29px; padding-left: 14px; padding-bottom: 2px; }
.tabs .current { font-weight: 700; border-bottom: 3px solid #217346; border-top: 3px solid transparent; }

/* ribbon */
.ribbon { display: flex; flex: none; border-bottom: 3px solid #d3d1d3; overflow: hidden; }
.back .ribbon { height: 99px; --gap: 2px; --sep: 5px; }
.front .ribbon { height: 103px; --gap: 3px; --sep: 6px; }
.group { display: flex; flex-direction: column; flex: none; margin: 2px 0 4px; border-right: 1px solid #bcbabc; }
.group footer { position: relative; display: flex; justify-content: center; align-items: center; height: 14px; line-height: 14px; margin-top: auto; padding-right: 14px; }
.launch { position: absolute; right: 2px; bottom: 0; }
.tools { padding: 8px 8px 0; }
.front .tools { padding-top: 10px; }
.row { display: flex; align-items: center; height: 23px; }
.second { margin-top: 8px; }
.front .second { height: 26px; }
.combo { display: flex; align-items: center; flex: none; height: 23px; padding: 0 3px 0 2px; background: #fff; border: 1px solid #c6c4c6; color: #333; }
.combo select { flex: 1; appearance: none; height: 20px; }
.combo.wide { width: 172px; }
.front .combo.wide { width: 177px; }
.combo.size { width: 40px; margin: 0 6px 0 2px; }
.front .combo.size { width: 41px; margin-left: 3px; }
.combo.full { width: 100%; }
.grow { margin-right: 9px; }
.ib { width: 22px; height: 22px; font-size: 14px; }
.ib i { font-family: "Liberation Serif", serif; font-size: 16px; }
.ib.gap { margin-left: var(--gap); }
.ib.on { background: #d2cfc9; border: 1px solid #8d8b88; }
.dd { width: 14px; height: 22px; }
.sep { width: 1px; height: 21px; margin: 0 4px 0 var(--sep); background: #d0ced0; }
.wen { flex-direction: column; font-size: 8px; line-height: 8px; }
.zi { color: #2b88c8; }
.back .clip { width: 31px; }
.back .clip .tools { display: flex; flex-direction: column; gap: 14px; padding: 33px 0 0; overflow: hidden; }
.back .clip .tools svg { margin-left: 9px; }
.back .font { width: 278px; }
.back .align { width: 255px; }
.back .number { width: 156px; }
.front .clip { width: 119px; }
.front .font { width: 286px; }
.front .align { width: 237px; }
.front .number { width: 141px; }
.tools.split { display: flex; padding-right: 0; }
.wrapcol { margin-left: 4px; padding-left: 8px; border-left: 1px solid #d0ced0; }
.front .wrapcol { padding-left: 6px; }
.tb { gap: 3px; }
.dd.far { margin-left: 6px; }
.pc { margin-left: 3px; }
.apart { margin-left: 8px; }
.over { position: relative; }
.stacked { position: absolute; left: 8px; top: 4px; }
.group.styles { flex-direction: row; border: 0; flex: 1; min-width: 0; }
.back .styles { padding: 7px 0 0 10px; gap: 5px; }
.big { flex-direction: column; justify-content: flex-start; width: 48px; line-height: 15px; }
.big svg:first-child { margin-bottom: 7px; }
.big svg + span + svg { margin-top: 4px; }
.big svg:first-child[height="26"] { margin-bottom: 4px; }
.front .styles { padding: 4px 0 0 11px; }
.tight { width: 36px; height: 16px; justify-content: flex-start; gap: 2px; }
.tight + .tight { width: 43px; }
.front .clip .tools { display: flex; padding: 5px 0 0 17px; }
.paste { flex-direction: column; }
.paste svg:first-child { margin-bottom: -1px; }
.paste span { margin-bottom: 4px; }
.stack { display: flex; flex-direction: column; gap: 7px; margin-left: 6px; }
.stack button { justify-content: flex-start; gap: 6px; }
.stack button:first-child svg { margin-left: 3px; }

/* formula bars */
.formula { display: flex; flex: none; padding: 8px 0 10px; background: #e6e6e6; font-size: 13px; }
.front .formula { padding: 9px 0 10px 5px; }
.namebox, .fx { display: flex; align-items: center; height: 28px; background: #fff; border: 1px solid #cbc9cb; }
.namebox { width: 105px; padding: 0 6px; }
.namebox input { flex: 1; }
.back .namebox { width: 11px; padding: 0 4px 0 0; justify-content: flex-end; border-left: 0; overflow: hidden; }
.back .namebox input { display: none; }
.dots { width: 2px; height: 11px; margin: 8px 14px; background: repeating-linear-gradient(#aaa 0 2px, transparent 2px 4px); }
.front .formula .dots { margin: 9px 15px 0 14px; }
.fx { width: 110px; justify-content: space-between; padding: 0 12px; }
.front .fx { width: 113px; }
.fx em { font: italic 16px/20px "Liberation Serif", serif; }
.fx small { font-size: 12px; }
.entry { flex: 1; height: 28px; margin-left: 3px; padding-left: 11px; background: #fff; border: 1px solid #cbc9cb; border-right: 0; }

/* grids */
.sheet { flex: 1; min-height: 0; overflow: hidden; background: #fdfdfd; }
table { table-layout: fixed; border-collapse: separate; border-spacing: 0; }
th, td { padding: 0; font-weight: 400; white-space: nowrap; overflow: hidden; border-right: 1px solid #d0d0d0; border-bottom: 1px solid #d0d0d0; line-height: 17px; }
thead th { height: 19px; background: #e6e6e6; border-bottom-color: #8e8e8e; border-right-color: #b5b5b5; }
.back table { width: 1753px; font-family: "Liberation Serif", "Noto Sans CJK SC", serif; font-size: 17px; color: #111; text-align: center; }
.back th { font-size: 16px; padding-top: 1px; }
.back td { padding-top: 2px; line-height: 16px; }
.edge { width: 3px; }
.unit { width: 70px; }
.back tbody tr { height: 19px; }
.back tbody .head { height: 27px; font-size: 16px; }
.head td { font-weight: 700; border-bottom-color: #8e8e8e; }
.back .head td { line-height: 20px; }
.head .light { font-weight: 300; }
.back .spaced { padding-right: 8px; }
.front table { width: calc(100% + 36px); font-family: "Noto Sans CJK SC", sans-serif; font-size: 14px; }
.rownum { width: 29px; }
.ca { width: 74px; }
.cb { width: 104px; }
.front tbody tr { height: 20px; }
.front tbody tr:nth-child(2n) { height: 19px; }
.front tbody tr:nth-child(12n) { height: 20px; }
.front tbody th, .front td { padding-top: 3px; line-height: 15px; }
.front td { padding-left: 3px; color: #444; }
.front thead th { font-size: 15px; padding-top: 1px; }
.front tbody th { background: #e6e6e6; border-right-color: #a3a3a3; border-bottom-color: #c2c2c2; padding-right: 1px; }
.front th.picked { background: #d3d1d3; color: #217346; }
.front thead th.picked { border-bottom: 2px solid #217346; padding-top: 0; }
.front tbody th.picked { border-right: 2px solid #217346; }
.front .corner svg { margin: 2px 0 0 14px; }
.front td.num { text-align: right; padding-right: 2px; padding-left: 0; }
.front td.title { font-size: 15px; }
.front td.spill { overflow: visible; position: relative; border-right-color: transparent; }
.front td.title.spill { border-right-color: #d0d0d0; }
.front td.sel { position: relative; border-right-color: transparent; box-shadow: inset 0 2px #217346, inset 0 -1px #217346; border-bottom-color: #217346; }
.front td.shade { background: #c6c4c6; }
.front td.first { box-shadow: inset 2px 0 #217346, inset 0 2px #217346, inset 0 -1px #217346; }
.front td.last { border-right: 2px solid #217346; }
.handle { position: absolute; right: -4px; bottom: -3px; width: 7px; height: 7px; background: #217346; border: 1px solid #fff; }
.quick { position: absolute; z-index: 2; left: 33px; top: 3px; width: 24px; height: 24px; background: #fff; border: 1px solid #2d6b52; }

/* sheet tabs and status bars */
.sheetbar { display: flex; flex: none; height: 28px; background: #e6e6e6; border-top: 1px solid #9a9a9a; font-size: 13px; }
.front .sheetbar { height: 30px; border-bottom: 1px solid #d0ced0; }
.stab { height: 24px; width: 69px; padding-bottom: 1px; border-right: 1px solid #9a9a9a; }
.back .stab:first-child { margin-left: 4px; }
.stab.active { background: #fff; color: #217346; border-right: 0; border-bottom: 2px solid #217346; }
.front .stab { width: 64px; height: 25px; }
.add { margin: 4px 0 0 32px; height: 18px; }
.front .add { margin: 5px 0 0 34px; }
.arrows { display: flex; align-items: center; gap: 25px; width: 103px; padding: 0 0 4px 27px; color: #bbb; }
.hscroll { display: flex; margin-top: 6px; height: 16px; width: 655px; background: #fff; border: 1px solid #9a9a9a; border-right: 0; color: #222; }
.hscroll button { width: 15px; border-right: 1px solid #9a9a9a; }
.front .hscroll { width: 285px; background: #f3f1f4; border: 0; }
.front .hscroll button { width: 16px; background: #fff; border: 1px solid #9a9a9a; }
.thumb { width: 23px; background: #fff; border: 1px solid #9a9a9a; border-left-width: 0; }
.status { display: flex; align-items: center; flex: none; height: 22px; white-space: nowrap; }
.back .status { border-top: 1px solid #d0ced0; }
.front .status { padding-left: 8px; }
.tail { display: flex; justify-content: flex-end; width: 63px; overflow: hidden; }
.acc { display: flex; align-items: center; gap: 3px; margin-left: 19px; }
.count { margin-right: 20px; }
.view { width: 40px; height: 22px; }
.front .view { width: 41px; }
.view.on { background: #d2cfc9; }
.less { width: 20px; }
.zoom { flex: none; width: 70px; overflow: hidden; height: 16px; }
.front .zoom { width: 78px; }
.zoom input { appearance: none; display: block; width: 102px; height: 16px; background: linear-gradient(#333, #333) center / 100% 1px no-repeat; }
.zoom input::-webkit-slider-thumb { appearance: none; width: 5px; height: 11px; background: #333; }

/* input method bar */
.ime { position: absolute; left: 218px; bottom: 1px; display: flex; align-items: center; height: 25px; padding: 2px 3px; background: #d6d3ce; border: 1px solid; border-color: #eee #666 #666 #eee; }
.ime button { width: 20px; height: 19px; border-right: 1px solid #222; border-bottom: 1px solid #222; }
.ime .name { width: 70px; font-size: 15px; color: #111; }

/* taskbar */
.taskbar { display: flex; flex: none; height: 40px; padding-left: 2px; background: #101010; color: #e6e6e6; }
.app { width: 45px; margin: 0 2px; border-bottom: 2px solid transparent; }
.app.open { border-bottom-color: #84c8e8; }
.app.active { background: #333; border-bottom-color: #84c8e8; }
.tray { display: flex; align-items: center; }
.tray span { display: flex; justify-content: center; width: 24px; }
.lang { align-self: center; margin: 0 13px 0 7px; }
.clock { display: flex; flex-direction: column; justify-content: center; width: 23px; overflow: hidden; line-height: 19px; }
.time { padding-left: 15px; }

/* screen overlays */
.banner { position: absolute; right: 3px; top: 18px; font: 33px/40px "Liberation Serif", "Noto Sans CJK SC", serif; color: #e3050c; white-space: nowrap; }
.spot { position: absolute; right: 161px; top: 54px; width: 30px; height: 30px; padding: 15px 0 0 15px; border-radius: 50%; background: #7dba7f; }
</style>
